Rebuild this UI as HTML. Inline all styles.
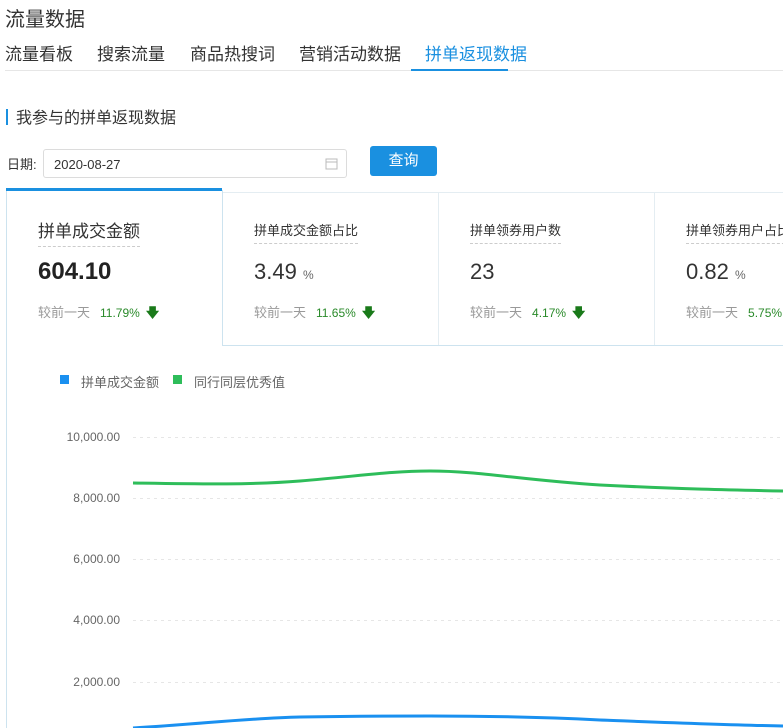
<!DOCTYPE html>
<html><head><meta charset="utf-8"><style>
*{margin:0;padding:0;box-sizing:border-box}
body{width:783px;height:728px;overflow:hidden;background:#fff;font-family:"Liberation Sans","Noto Sans CJK SC",sans-serif;color:#333;position:relative}
.a{position:absolute;white-space:nowrap}
.tab{font-size:17px;color:#333;top:40px}
.lbl{font-size:13px;color:#333;border-bottom:1px dashed #ccc;padding-bottom:4px}
.cmp{font-size:13px;color:#999}
.cmp b{font-weight:normal;color:#2a8a2a;font-size:12px;margin-left:10px}
.ar{display:inline-block;color:#1a7a1a;font-weight:bold;margin-left:6px}
.yl{font-size:12px;color:#666;text-align:right;width:80px;left:40px}
</style></head><body>
<div class="a" style="left:5px;top:3px;font-size:20px;color:#333">流量数据</div>
<div class="a tab" style="left:5px">流量看板</div>
<div class="a tab" style="left:97px">搜索流量</div>
<div class="a tab" style="left:190px">商品热搜词</div>
<div class="a tab" style="left:299px">营销活动数据</div>
<div class="a tab" style="left:425px;color:#1a90e0">拼单返现数据</div>
<div class="a" style="left:5px;top:70px;width:778px;height:1px;background:#e6e6e6"></div>
<div class="a" style="left:411px;top:69px;width:97px;height:2px;background:#1a90e0"></div>
<div class="a" style="left:6px;top:109px;width:2px;height:16px;background:#1a90e0"></div>
<div class="a" style="left:16px;top:104px;font-size:16px;color:#333">我参与的拼单返现数据</div>
<div class="a" style="left:7px;top:154px;font-size:13px;color:#333">日期:</div>
<div class="a" style="left:43px;top:149px;width:304px;height:29px;border:1px solid #dcdcdc;border-radius:3px;font-size:13px;color:#333;padding:7px 10px">2020-08-27
<svg style="position:absolute;right:8px;top:7px" width="13" height="13" viewBox="0 0 13 13"><rect x="1" y="2" width="11" height="10" fill="none" stroke="#bbb"/><line x1="1" y1="5" x2="12" y2="5" stroke="#bbb"/></svg></div>
<div class="a" style="left:370px;top:146px;width:67px;height:30px;background:#1a90e0;border-radius:3px;color:#fff;font-size:15px;text-align:center;line-height:30px">查询</div>
<div class="a" style="left:6px;top:189px;width:1px;height:539px;background:#cde3ef"></div>
<div class="a" style="left:6px;top:188px;width:216px;height:3px;background:#1a90e0"></div>
<div class="a" style="left:222px;top:192px;width:561px;height:1px;background:#e4edf2"></div>
<div class="a" style="left:222px;top:190px;width:1px;height:156px;background:#cde3ef"></div>
<div class="a" style="left:438px;top:192px;width:1px;height:153px;background:#e4edf2"></div>
<div class="a" style="left:654px;top:192px;width:1px;height:153px;background:#e4edf2"></div>
<div class="a" style="left:222px;top:345px;width:561px;height:1px;background:#cde3ef"></div>

<div class="a lbl" style="left:38px;top:217px;font-size:17px">拼单成交金额</div>
<div class="a" style="left:38px;top:258px;font-size:24px;font-weight:bold;color:#222">604.10</div>
<div class="a cmp" style="left:38px;top:302px">较前一天<b>11.79%</b><span class="ar">🡇</span></div>

<div class="a lbl" style="left:254px;top:220px">拼单成交金额占比</div>
<div class="a" style="left:254px;top:259px;font-size:22px;color:#333">3.49 <span style="font-size:12px;color:#666">%</span></div>
<div class="a cmp" style="left:254px;top:302px">较前一天<b>11.65%</b><span class="ar">🡇</span></div>

<div class="a lbl" style="left:470px;top:220px">拼单领券用户数</div>
<div class="a" style="left:470px;top:259px;font-size:22px;color:#333">23</div>
<div class="a cmp" style="left:470px;top:302px">较前一天<b>4.17%</b><span class="ar">🡇</span></div>

<div class="a lbl" style="left:686px;top:220px">拼单领券用户占比</div>
<div class="a" style="left:686px;top:259px;font-size:22px;color:#333">0.82 <span style="font-size:12px;color:#666">%</span></div>
<div class="a cmp" style="left:686px;top:302px">较前一天<b>5.75%</b></div>

<div class="a" style="left:60px;top:375px;width:9px;height:9px;background:#1a90f0"></div>
<div class="a" style="left:81px;top:372px;font-size:13px;color:#666">拼单成交金额</div>
<div class="a" style="left:173px;top:375px;width:9px;height:9px;background:#2ebd5a"></div>
<div class="a" style="left:194px;top:372px;font-size:13px;color:#666">同行同层优秀值</div>

<div class="a yl" style="top:430px">10,000.00</div>
<div class="a yl" style="top:491px">8,000.00</div>
<div class="a yl" style="top:552px">6,000.00</div>
<div class="a yl" style="top:613px">4,000.00</div>
<div class="a yl" style="top:675px">2,000.00</div>
<svg class="a" style="left:0;top:0" width="783" height="728">
<g stroke="#e6e6e6" stroke-dasharray="3,4">
<line x1="133" y1="437.5" x2="783" y2="437.5"/><line x1="133" y1="498.5" x2="783" y2="498.5"/><line x1="133" y1="559.5" x2="783" y2="559.5"/><line x1="133" y1="620.5" x2="783" y2="620.5"/><line x1="133" y1="682.5" x2="783" y2="682.5"/></g>
<path d="M133 483 C200 484 250 485 300 481 C360 476 390 471 430 471 C480 471 520 480 600 485 C680 489 730 490 783 491" fill="none" stroke="#2ebd5a" stroke-width="3"/>
<path d="M133 728 C200 724 250 718 300 717 C360 716 400 716 430 716 C500 716 560 718 600 720 C680 723 730 725 783 726" fill="none" stroke="#1a90f0" stroke-width="3"/>
</svg>
</body></html>
